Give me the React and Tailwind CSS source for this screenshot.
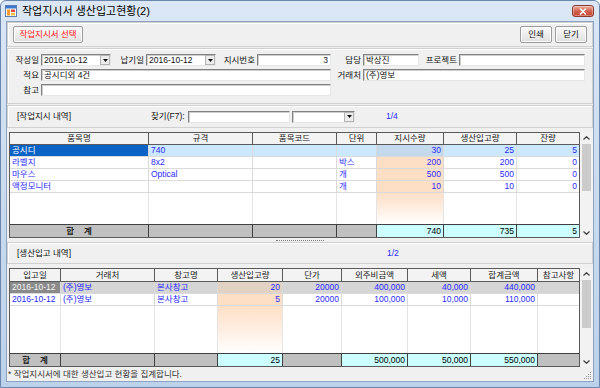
import React from "react";

const FONT = "font-['Liberation_Sans','Noto_Sans_CJK_KR',sans-serif]";
const BL = "text-[#2a2aff]";

const fieldCls =
  "h-[12px] bg-white border border-t-[#808080] border-l-[#808080] border-b-[#e6e6e6] border-r-[#e6e6e6] shadow-[inset_1px_1px_0_#cfcfcf] flex items-center leading-none whitespace-nowrap overflow-hidden shrink-0";

function Field({ className = "", children, right }) {
  return (
    <div className={`${fieldCls} px-[2px] ${right ? "justify-end" : ""} ${className}`}>
      {children}
    </div>
  );
}

function Combo({ className = "", children }) {
  return (
    <div className={`${fieldCls} ${className}`}>
      <span className="flex-1 pl-[2px] overflow-hidden">{children}</span>
      <span className="w-[10px] h-[10px] bg-[#ececec] border border-[#b4b4b4] flex items-center justify-center shrink-0">
        <svg width="5" height="3" viewBox="0 0 5 3">
          <path d="M0 0H5L2.5 3Z" fill="#111" />
        </svg>
      </span>
    </div>
  );
}

function Label({ className = "", children }) {
  return <div className={`shrink-0 text-right pr-[2px] leading-none whitespace-nowrap ${className}`}>{children}</div>;
}

function Btn({ className = "", children }) {
  return (
    <div
      className={`h-[17px] rounded-[2px] border border-[#9c9c9c] bg-linear-to-b from-[#fafafa] to-[#e0e0e0] shadow-[inset_0_0_0_1px_#fdfdfd] flex items-center justify-center leading-none whitespace-nowrap ${className}`}
    >
      {children}
    </div>
  );
}

function ScrollBar({ thumbCls }) {
  return (
    <div className="w-[13px] h-full bg-[#f2f2f2] flex flex-col items-center">
      <div className="h-[12px] w-full flex items-center justify-center shrink-0">
        <svg width="7" height="4" viewBox="0 0 7 4">
          <path d="M0.5 3.5L3.5 0.7L6.5 3.5" stroke="#404040" fill="none" strokeWidth="1.2" />
        </svg>
      </div>
      <div className={`w-[9px] bg-[#cbcbcb] shrink-0 ${thumbCls}`} />
      <div className="flex-1" />
      <div className="h-[10px] w-full flex items-center justify-center shrink-0">
        <svg width="7" height="4" viewBox="0 0 7 4">
          <path d="M0.5 0.5L3.5 3.3L6.5 0.5" stroke="#404040" fill="none" strokeWidth="1.2" />
        </svg>
      </div>
    </div>
  );
}

function Grid({ colsCls, heightCls, headerH, headers, aligns, rows, orangeCol, sums, thumbCls }) {
  const n = headers.length;
  const br = (i) => (i < n - 1 ? "border-r" : "");
  return (
    <div className={`flex ml-[2px] shrink-0 ${heightCls}`}>
      <div className="w-[571px] h-full border border-[#5a5a5a] flex flex-col bg-white">
        <div className={`grid ${colsCls} ${headerH} shrink-0`}>
          {headers.map((h, i) => (
            <div
              key={i}
              className={`flex items-center justify-center leading-none whitespace-nowrap bg-[#f3f3f3] border-b border-[#5a5a5a] text-[#222] ${br(i)}`}
            >
              {h}
            </div>
          ))}
        </div>
        {rows.map((r, ri) => (
          <div key={ri} className={`grid ${colsCls} h-[12px] shrink-0`}>
            {r.map((c, i) => (
              <div
                key={i}
                className={`flex items-center leading-none px-[2px] whitespace-nowrap overflow-hidden border-b border-[#dadada] ${br(i)} ${
                  aligns[i] === "r" ? "justify-end" : ""
                } ${c.cls}`}
              >
                {c.t}
              </div>
            ))}
          </div>
        ))}
        <div className={`grid ${colsCls} flex-1`}>
          {headers.map((_, i) => (
            <div
              key={i}
              className={`${br(i)} border-[#e4e4e4] ${
                i === orangeCol ? "bg-linear-to-b from-[#fddfc6] via-[#feeee2] to-white" : ""
              }`}
            />
          ))}
        </div>
        <div className={`grid ${colsCls} h-[13px] shrink-0 border-t border-[#404040]`}>
          {sums.map((s, i) => (
            <div
              key={i}
              className={`flex items-center leading-none px-[2px] whitespace-nowrap ${br(i)} border-[#404040] ${s.cls}`}
            >
              {s.t}
            </div>
          ))}
        </div>
      </div>
      <ScrollBar thumbCls={thumbCls} />
    </div>
  );
}

const SEL1 = "bg-[#0b63c6] text-white";
const SELB = `bg-[#cce8ff] ${BL}`;
const SELO = `bg-[#c5d9ec] ${BL}`;
const OR = `bg-[#fddfc6] ${BL}`;
const GSEL1 = "bg-[#8a8a8a] text-[#f4f4f4]";
const GSEL = `bg-[#d5d5d5] ${BL}`;
const GSELO = `bg-[#e2d2c4] ${BL}`;
const GR = "bg-[#c0c0c0]";
const CY = "bg-[#ccffff] justify-end text-black";
const HAP = {
  t: (
    <>
      <span>합</span>
      <span className="ml-[10px]">계</span>
    </>
  ),
  cls: `${GR} justify-center font-bold text-[#222]`,
};

const rows1 = [
  [
    { t: "공시디", cls: SEL1 },
    { t: "740", cls: SELB },
    { t: "", cls: SELB },
    { t: "", cls: SELB },
    { t: "30", cls: SELO },
    { t: "25", cls: SELB },
    { t: "5", cls: SELB },
  ],
  [
    { t: "라벨지", cls: BL },
    { t: "8x2", cls: BL },
    { t: "", cls: "" },
    { t: "박스", cls: BL },
    { t: "200", cls: OR },
    { t: "200", cls: BL },
    { t: "0", cls: BL },
  ],
  [
    { t: "마우스", cls: BL },
    { t: "Optical", cls: BL },
    { t: "", cls: "" },
    { t: "개", cls: BL },
    { t: "500", cls: OR },
    { t: "500", cls: BL },
    { t: "0", cls: BL },
  ],
  [
    { t: "액정모니터", cls: BL },
    { t: "", cls: "" },
    { t: "", cls: "" },
    { t: "개", cls: BL },
    { t: "10", cls: OR },
    { t: "10", cls: BL },
    { t: "0", cls: BL },
  ],
];

const sums1 = [
  HAP,
  { t: "", cls: GR },
  { t: "", cls: GR },
  { t: "", cls: GR },
  { t: "740", cls: CY },
  { t: "735", cls: CY },
  { t: "5", cls: CY },
];

const rows2 = [
  [
    { t: "2016-10-12", cls: GSEL1 },
    { t: "(주)영보", cls: GSEL },
    { t: "본사창고", cls: GSEL },
    { t: "20", cls: GSELO },
    { t: "20000", cls: GSEL },
    { t: "400,000", cls: GSEL },
    { t: "40,000", cls: GSEL },
    { t: "440,000", cls: GSEL },
    { t: "", cls: GSEL },
  ],
  [
    { t: "2016-10-12", cls: BL },
    { t: "(주)영보", cls: BL },
    { t: "본사창고", cls: BL },
    { t: "5", cls: OR },
    { t: "20000", cls: BL },
    { t: "100,000", cls: BL },
    { t: "10,000", cls: BL },
    { t: "110,000", cls: BL },
    { t: "", cls: "" },
  ],
];

const sums2 = [
  HAP,
  { t: "", cls: GR },
  { t: "", cls: GR },
  { t: "25", cls: CY },
  { t: "", cls: GR },
  { t: "500,000", cls: CY },
  { t: "50,000", cls: CY },
  { t: "550,000", cls: CY },
  { t: "", cls: GR },
];

const panel = "border border-[#d0d0d0] shadow-[inset_1px_1px_0_#ffffff] shrink-0";

function AppIcon() {
  return (
    <svg width="12" height="12" viewBox="0 0 12 12" className="shrink-0">
      <rect x="0.5" y="0.5" width="11" height="11" fill="#fff" stroke="#5b7fb4" />
      <rect x="1" y="1" width="10" height="2.5" fill="#3c78d0" />
      <rect x="2" y="4.5" width="3" height="6" fill="#f29a2e" />
      <rect x="6" y="4.5" width="4" height="2.5" fill="#e2463f" />
      <rect x="6" y="8" width="4" height="2.5" fill="#f5c342" />
    </svg>
  );
}

function CloseBtn() {
  return (
    <div className="w-[22px] h-[12px] rounded-[3px] border border-[#8a3a30] bg-linear-to-b from-[#eab0a2] via-[#d2634f] to-[#c2432f] shadow-[inset_0_0_0_1px_rgba(255,255,255,0.35)] flex items-center justify-center">
      <svg width="8" height="7" viewBox="0 0 8 7">
        <path d="M1.5 1L6.5 6M6.5 1L1.5 6" stroke="#fff" strokeWidth="1.6" strokeLinecap="round" />
      </svg>
    </div>
  );
}

export default function App() {
  return (
    <div
      className={`w-[600px] h-[388px] ${FONT} text-[8.5px] text-[#111] bg-linear-to-b from-[#dbe7f5] via-[#cadbee] to-[#bcd1ea] border border-[#6a86ad] rounded-t-[6px] flex flex-col overflow-hidden`}
    >
      {/* title bar */}
      <div className="h-[20px] shrink-0 flex items-center pl-[4px] pr-[5px]">
        <AppIcon />
        <span className="ml-[5px] text-[11px] text-black leading-none whitespace-nowrap">작업지시서 생산입고현황(2)</span>
        <div className="flex-1" />
        <CloseBtn />
      </div>

      {/* client area */}
      <div className="flex-1 mx-[5px] mb-[5px] border border-[#8ea3c0] bg-[#f0f0f0] flex flex-col min-h-0">
        {/* toolbar */}
        <div className={`${panel} h-[25px] flex items-center pl-[5px] pr-[5px]`}>
          <Btn className="w-[70px] text-[#ff1a1a]">작업지시서 선택</Btn>
          <div className="flex-1" />
          <Btn className="w-[32px]">인쇄</Btn>
          <Btn className="w-[32px] ml-[3px]">닫기</Btn>
        </div>

        {/* header form */}
        <div className={`${panel} mt-[1px] h-[56px] flex flex-col pt-[5px] gap-[3px]`}>
          <div className="flex items-center">
            <Label className="w-[33px]">작성일</Label>
            <Combo className="w-[70px]">2016-10-12</Combo>
            <Label className="w-[35px]">납기일</Label>
            <Combo className="w-[70px]">2016-10-12</Combo>
            <Label className="w-[41px]">지시번호</Label>
            <Field className="w-[74px]" right>
              3
            </Field>
            <Label className="w-[32px]">담당</Label>
            <Field className="w-[56px]">박상진</Field>
            <Label className="w-[40px]">프로젝트</Label>
            <Field className="w-[126px]" />
          </div>
          <div className="flex items-center">
            <Label className="w-[33px]">적요</Label>
            <Field className="w-[290px]">공시디외 4건</Field>
            <Label className="w-[32px]">거래처</Label>
            <Field className="w-[222px]">(주)영보</Field>
          </div>
          <div className="flex items-center">
            <Label className="w-[33px]">참고</Label>
            <Field className="w-[290px]" />
          </div>
        </div>

        {/* list 1 caption */}
        <div className={`${panel} mt-[1px] h-[23px] flex items-center pl-[9px]`}>
          <span className="w-[134px] shrink-0 leading-none whitespace-nowrap">[작업지시 내역]</span>
          <span className="w-[37px] shrink-0 leading-none whitespace-nowrap">찾기(F7):</span>
          <Field className="w-[102px]" />
          <Combo className="w-[63px] ml-[2px]" />
          <span className={`ml-[31px] leading-none ${BL}`}>1/4</span>
        </div>

        <div className="mt-[4px]">
          <Grid
            colsCls="grid-cols-[139px_104px_84px_40px_67px_73px_62px]"
            heightCls="h-[106px]"
            headerH="h-[12px]"
            headers={["품목명", "규격", "품목코드", "단위", "지시수량", "생산입고량", "잔량"]}
            aligns={["l", "l", "l", "l", "r", "r", "r"]}
            rows={rows1}
            orangeCol={4}
            sums={sums1}
            thumbCls="h-[47px]"
          />
        </div>

        {/* splitter */}
        <div className="h-[4px] shrink-0 flex items-center justify-center">
          <div className="w-[48px] border-t border-dotted border-[#7a7a7a]" />
        </div>

        {/* list 2 caption */}
        <div className={`${panel} h-[22px] flex items-center pl-[9px]`}>
          <span className="w-[370px] shrink-0 leading-none whitespace-nowrap">[생산입고 내역]</span>
          <span className={`leading-none ${BL}`}>1/2</span>
        </div>

        <div className="mt-[4px]">
          <Grid
            colsCls="grid-cols-[51px_94px_63px_65px_59px_66px_63px_67px_41px]"
            heightCls="h-[99px]"
            headerH="h-[13px]"
            headers={["입고일", "거래처", "창고명", "생산입고량", "단가", "외주비금액", "세액", "합계금액", "참고사항"]}
            aligns={["l", "l", "l", "r", "r", "r", "r", "r", "l"]}
            rows={rows2}
            orangeCol={3}
            sums={sums2}
            thumbCls="h-[48px]"
          />
        </div>

        {/* footer */}
        <div className="flex-1 flex items-center pl-[1px] pr-[1px] relative">
          <span className="leading-none text-[#333] whitespace-nowrap">* 작업지시서에 대한 생산입고 현황을 집계합니다.</span>
          <div className="flex-1" />
          <svg width="9" height="9" viewBox="0 0 9 9" className="self-end mb-[1px]">
            <rect x="7" y="1" width="1" height="1" fill="#9a9a9a" />
            <rect x="5" y="3" width="1" height="1" fill="#9a9a9a" />
            <rect x="7" y="3" width="1" height="1" fill="#9a9a9a" />
            <rect x="3" y="5" width="1" height="1" fill="#9a9a9a" />
            <rect x="5" y="5" width="1" height="1" fill="#9a9a9a" />
            <rect x="7" y="5" width="1" height="1" fill="#9a9a9a" />
            <rect x="1" y="7" width="1" height="1" fill="#9a9a9a" />
            <rect x="3" y="7" width="1" height="1" fill="#9a9a9a" />
            <rect x="5" y="7" width="1" height="1" fill="#9a9a9a" />
            <rect x="7" y="7" width="1" height="1" fill="#9a9a9a" />
          </svg>
        </div>
      </div>
    </div>
  );
}
